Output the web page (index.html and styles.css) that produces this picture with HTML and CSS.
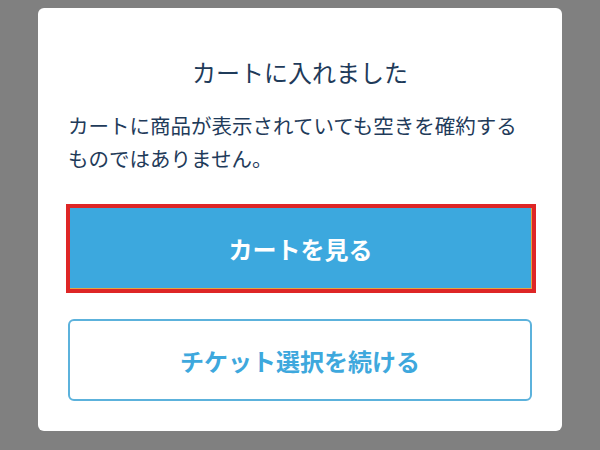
FILE: index.html
```html
<!DOCTYPE html>
<html lang="ja">
<head>
<meta charset="utf-8">
<link rel="stylesheet" href="styles.css">
</head>
<body>
<div class="modal">
  <h2 class="title">カートに入れました</h2>
  <p class="message">カートに商品が表示されていても空きを確約するものではありません。</p>
  <div class="actions">
    <button class="btn btn-primary">カートを見る</button>
    <button class="btn btn-secondary">チケット選択を続ける</button>
  </div>
</div>
</body>
</html>
```
FILE: styles.css
```css
html, body {
  margin: 0;
  padding: 0;
  background: #808080;
  height: 100%;
}
body {
  font-family: "Noto Sans CJK JP", "Noto Sans", sans-serif;
  overflow: hidden;
}
.modal {
  box-sizing: border-box;
  width: 524px;
  height: 423px;
  margin: 8px auto 0;
  background: #ffffff;
  border-radius: 6px;
  padding: 46px 30px 30px;
  display: flex;
  flex-direction: column;
}
.title {
  margin: 0 0 18.5px;
  font-size: 24px;
  line-height: 36px;
  font-weight: 400;
  text-align: center;
  color: #1f3b5a;
}
.message {
  margin: 0 0 33.5px;
  font-size: 20.5px;
  line-height: 33px;
  color: #1f3b5a;
}
.actions {
  display: flex;
  flex-direction: column;
  gap: 30px;
}
.btn {
  font-family: "Noto Sans CJK JP", "Noto Sans", sans-serif;
  font-size: 24px;
  font-weight: 700;
  box-sizing: border-box;
  display: flex;
  align-items: center;
  justify-content: center;
  padding: 0;
  cursor: pointer;
}
.btn-primary {
  margin-left: 2px;
  width: 462px;
  height: 81px;
  background: #3ca8de;
  color: #ffffff;
  border: none;
  border-right: 1px solid #e3a442;
  border-bottom: 1px solid #e3a442;
  border-radius: 0;
  outline: 4px solid #de2626;
}
.btn-secondary {
  width: 464px;
  height: 82px;
  background: #ffffff;
  color: #3ea8dd;
  border: 2px solid #5cb2dc;
  border-radius: 6px;
}
```
